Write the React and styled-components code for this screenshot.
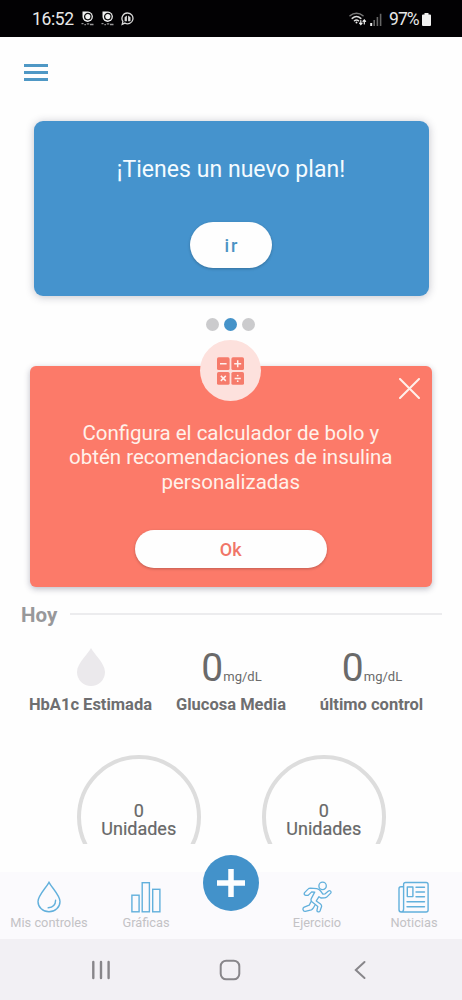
import React from 'react';
import styled, { createGlobalStyle } from 'styled-components';

const GlobalStyle = createGlobalStyle`
  * {
    box-sizing: border-box;
  }
  body {
    margin: 0;
    background: #fefefe;
    font-family: Roboto, sans-serif;
  }
  svg {
    display: block;
    flex: none;
  }
`;

const Screen = styled.div`
  width: 462px;
  height: 1000px;
  display: flex;
  flex-direction: column;
  overflow: hidden;
  background: #fefefe;
`;

const StatusBar = styled.header`
  height: 37px;
  flex: none;
  display: flex;
  align-items: center;
  padding: 1px 31px 0 32px;
  background: #020103;
  color: #e8e8e8;
`;
const Clock = styled.span`
  width: 49px;
  font-size: 17.5px;
  letter-spacing: -0.35px;
  white-space: nowrap;
`;
const StatusGroup = styled.div`
  display: flex;
  align-items: center;
  gap: ${props => props.gap};
  margin-left: ${props => (props.end ? 'auto' : '0')};
`;
const Battery = styled.span`
  width: 30px;
  margin-left: 4px;
  font-size: 17.5px;
  letter-spacing: -0.9px;
  white-space: nowrap;
`;

const TopBar = styled.div`
  height: 84px;
  flex: none;
  padding: 27px 24px 0;
`;
const MenuButton = styled.button`
  width: 24px;
  height: 17px;
  padding: 0;
  border: 0;
  background: none;
  display: flex;
  flex-direction: column;
  justify-content: space-between;
  span {
    width: 24px;
    height: 3px;
    background: #4f98c5;
  }
`;

const PlanCard = styled.section`
  width: 395px;
  height: 175px;
  flex: none;
  margin: 0 0 0 33.5px;
  padding-top: 35px;
  display: flex;
  flex-direction: column;
  align-items: center;
  border-radius: 9px;
  background: #4593cd;
  box-shadow: 0 1px 8px rgba(40, 40, 70, 0.28);
`;
const PlanTitle = styled.h2`
  margin: 0 0 39px;
  font-size: 23px;
  font-weight: 400;
  line-height: 27px;
  letter-spacing: 0.04px;
  color: #f4fbff;
`;
const PillButton = styled.button`
  width: ${props => props.width};
  height: ${props => props.height};
  padding: 0;
  border: 0;
  border-radius: 24px;
  background: #fefefe;
  color: ${props => props.color};
  font-family: inherit;
  font-size: 18px;
  font-weight: 500;
  letter-spacing: ${props => props.spacing};
  text-indent: ${props => props.spacing};
  box-shadow: 0 1px 3px rgba(0, 0, 0, 0.24);
`;

const Dots = styled.div`
  height: 70px;
  flex: none;
  display: flex;
  justify-content: center;
  gap: 5px;
  padding: 22px 1px 0 0;
`;
const Dot = styled.span`
  width: 13px;
  height: 13px;
  border-radius: 50%;
  background: ${props => (props.active ? '#4593c9' : '#cbcbcd')};
`;

const BolusCard = styled.section`
  position: relative;
  width: 401.5px;
  height: 220.5px;
  flex: none;
  margin-left: 30px;
  padding-top: 55px;
  display: flex;
  flex-direction: column;
  align-items: center;
  border-radius: 6px;
  background: #fc7a69;
  box-shadow: 0 2px 6px rgba(50, 50, 80, 0.32);
`;
const CalcBadge = styled.div`
  position: absolute;
  top: -26px;
  left: 170px;
  width: 61px;
  height: 61px;
  display: flex;
  align-items: center;
  justify-content: center;
  border-radius: 50%;
  background: #fde1dd;
`;
const CloseButton = styled.button`
  position: absolute;
  top: 12px;
  right: 11.5px;
  padding: 0;
  border: 0;
  background: none;
`;
const BolusText = styled.p`
  margin: 0 0 36px;
  font-size: 20.5px;
  line-height: 24.3px;
  text-align: center;
  white-space: nowrap;
  color: #fff1ea;
`;

const SectionHead = styled.div`
  height: 55px;
  flex: none;
  display: flex;
  align-items: center;
  gap: 13px;
  padding: 0 20px 0 21px;
  h3 {
    width: 36px;
    margin: 2px 0 0;
    font-size: 20.5px;
    font-weight: 700;
    color: #98989a;
  }
  hr {
    flex: 1;
    height: 2px;
    margin: 0;
    border: 0;
    background: #ececee;
  }
`;

const Stats = styled.div`
  height: 113px;
  flex: none;
  display: grid;
  grid-template-columns: 141px 140px 141px;
  padding-left: 20px;
`;
const Stat = styled.div`
  display: flex;
  flex-direction: column;
  align-items: center;
  color: #6a6a6a;
`;
const StatValue = styled.div`
  height: 52px;
  display: flex;
  align-items: baseline;
  font-size: 39px;
  line-height: 52px;
  padding-left: 1px;
  small {
    font-size: 13px;
  }
`;
const StatDrop = styled.div`
  height: 52px;
  padding-top: 6px;
`;
const StatLabel = styled.div`
  font-size: 16.5px;
  font-weight: 700;
  line-height: 22px;
  white-space: nowrap;
  color: #6e6e70;
`;

const Gauges = styled.div`
  height: 89px;
  flex: none;
  display: flex;
  gap: 60.5px;
  padding-left: 76.5px;
  overflow: hidden;
`;
const Gauge = styled.div`
  width: 124.5px;
  height: 124.5px;
  flex: none;
  padding-top: 43px;
  border: 4px solid #dddddd;
  border-radius: 50%;
  font-size: 18px;
  line-height: 18.7px;
  text-align: center;
  color: #686868;
  -webkit-text-stroke: 0.2px #686868;
`;

const TabBar = styled.nav`
  height: 67px;
  flex: none;
  margin-top: 28px;
  display: grid;
  grid-template-columns: 98px 96px 74px 98px 96px;
  background: #fbfafd;
`;
const Tab = styled.a`
  display: flex;
  flex-direction: column;
  align-items: center;
  padding-top: 9px;
  font-size: 12.8px;
  line-height: 18px;
  letter-spacing: 0;
  white-space: nowrap;
  color: #c3c2c5;
  svg {
    margin: 0 1px 1px 0;
  }
`;
const AddButton = styled.button`
  width: 56px;
  height: 56px;
  margin: -17px 0 0 9px;
  padding: 0;
  border: 0;
  border-radius: 50%;
  display: flex;
  align-items: center;
  justify-content: center;
  background: #4392ca;
`;

const SystemBar = styled.footer`
  height: 61px;
  flex: none;
  display: grid;
  grid-template-columns: 166px 92px 167px;
  align-items: center;
  justify-items: center;
  padding: 1px 0 0 18px;
  background: #f2f0f4;
`;

const AppGlyph = () => (
  <svg width="13" height="16" viewBox="0 0 13 16">
    <path d="M1.500.5h5.500a5.200 5.200 0 1 1-5.500 5.500z" fill="#f2f2f2" />
    <circle cx="6.800" cy="5.600" r="3.200" fill="none" stroke="#111" strokeWidth="1.300" />
    <path d="M0.500 12.600h2M3.400 13.600h1.500M5.800 12.800h2.500M9 13.500h3.500" stroke="#999" strokeWidth="1.300" />
  </svg>
);

const ChatGlyph = () => (
  <svg width="13" height="14" viewBox="0 0 13 14">
    <path
      d="M6.700 1a5.400 5.400 0 1 1-2.800 10.100L1.200 12.400l.7-3A5.400 5.400 0 0 1 6.700 1z"
      fill="none"
      stroke="#d8d8d8"
      strokeWidth="1.300"
    />
    <path d="M3.600 5.200l2.300-1.700v5.800h-2.300zM7.100 3.500l2.400 1.700v4.100H7.100z" fill="#d8d8d8" />
  </svg>
);

const Wifi = () => (
  <svg width="18" height="14" viewBox="0 0 18 14" fill="none" strokeLinecap="round">
    <path d="M1 3.800C4.800.4 10.200.4 14 3.800" stroke="#777" strokeWidth="1.500" />
    <path d="M3.200 6.400c2.600-2.300 6-2.300 8.600 0" stroke="#ddd" strokeWidth="1.500" />
    <path d="M5.400 8.800c1.300-1.100 2.900-1.100 4.200 0" stroke="#ddd" strokeWidth="1.400" />
    <circle cx="7.500" cy="10.600" r="1" fill="#eee" />
    <path
      d="M11.800 8.500v4M10.500 11.200l1.300 1.500 1.300-1.500M15.300 12V8M14 9.400l1.300-1.500 1.300 1.500"
      stroke="#eee"
      strokeWidth="1.200"
    />
  </svg>
);

const Signal = () => (
  <svg width="12" height="13" viewBox="0 0 12 13">
    <path d="M.2 10h2v3h-2z" fill="#eee" />
    <path d="M3.400 7h1.600v6H3.400zM6.600 4h1.600v9H6.600zM9.800.8h1.600V13H9.800z" fill="#666" />
  </svg>
);

const BatteryGlyph = () => (
  <svg width="9" height="13" viewBox="0 0 9 13">
    <path d="M2.500 0h4v1.400H8q1 0 1 1V12q0 1-1 1H1q-1 0-1-1V2.400q0-1 1-1h1.500z" fill="#f2f2f2" />
  </svg>
);

const Calculator = () => (
  <svg width="27" height="28" viewBox="0 0 27 28">
    <g fill="#f67b6b">
      <rect x="0" y="0.300" width="12.600" height="12.800" rx="1.600" />
      <rect x="14.400" y="0.300" width="12.600" height="12.800" rx="1.600" />
      <rect x="0" y="15" width="12.600" height="12.800" rx="1.600" />
      <rect x="14.400" y="15" width="12.600" height="12.800" rx="1.600" />
      <circle cx="20.700" cy="18.600" r="0.900" fill="#fff0ed" />
      <circle cx="20.700" cy="24.200" r="0.900" fill="#fff0ed" />
    </g>
    <path
      d="M3 6.700h6.600M17.200 6.700h7M20.700 3.200v7M3.800 18.900l5 5M8.800 18.900l-5 5M17.600 21.400h6.200"
      fill="none"
      stroke="#fff0ed"
      strokeWidth="1.500"
    />
  </svg>
);

const Close = () => (
  <svg width="21" height="21" viewBox="0 0 21 21">
    <path d="M1 1l19 19M20 1L1 20" stroke="#fff0eb" strokeWidth="2" strokeLinecap="round" />
  </svg>
);

const SolidDrop = () => (
  <svg width="28" height="38" viewBox="0 0 28 38">
    <path d="M14 0C16 5 28 15 28 24a14 14 0 0 1-28 0C0 15 12 5 14 0z" fill="#ebe9ec" />
  </svg>
);

const Drop = () => (
  <svg width="24" height="32" viewBox="0 0 24 32" fill="none" stroke="#62b0dc" strokeWidth="1.400">
    <path d="M12 1.300C9 7 1 14.500 1 20.400a11 10.400 0 0 0 22 0C23 14.500 15 7 12 1.300z" />
    <path d="M18.600 19.200c0 4.500-2.600 7-7.400 7.600" strokeLinecap="round" />
  </svg>
);

const Bars = () => (
  <svg width="30" height="32" viewBox="0 0 30 32" fill="none" stroke="#62b0dc" strokeWidth="1.400">
    <rect x="0.900" y="14.200" width="7.200" height="16.600" />
    <rect x="11.200" y="1.700" width="7.200" height="29.100" />
    <rect x="21.700" y="8.300" width="7.200" height="22.500" />
  </svg>
);

const Runner = () => (
  <svg
    width="30"
    height="32"
    viewBox="0 0 30 32"
    fill="none"
    stroke="#62b0dc"
    strokeWidth="1.300"
    strokeLinejoin="round"
    strokeLinecap="round"
  >
    <circle cx="20.600" cy="4.900" r="3.700" />
    <path d="M4.400 14.300c-1.700.4-2.800-1.300-1.800-2.700l3.400-3.500c.7-.8 1.500-1 2.500-1l6.200.6c1.700.2 2.900 1 3.900 2.300l2.300 3.100 2.300-.3 3.200-2.700c1.700-1.100 3.300.5 2.300 2l-4 4c-.7.600-1.400.8-2.300.8l-3.500.100-1.900-1.300-2.700 4.200 4.200 3.100c1 .8 1.300 1.600 1 2.800l-1.500 4.200c-.6 1.500-3.300 1.200-3-.8l.8-3.800-5.600-4.300c-1.300-1.100-1.600-2.200-.8-3.700l3.300-6.300-3-.2-3.300 3.200c-.6.400-1.300.4-2 .2z" />
    <path d="M8.900 20.900l-1.700 3.300-5 1.900c-2.200 1.200-1.200 4.600 1.100 4.300l6.100-1.600c.9-.3 1.300-.8 1.800-1.600l1.700-3" />
  </svg>
);

const News = () => (
  <svg
    width="31"
    height="32"
    viewBox="0 0 31 32"
    fill="none"
    stroke="#62b0dc"
    strokeWidth="1.400"
    strokeLinejoin="round"
  >
    <path d="M5.600 28V3.500q0-2 2-2h20.500q2 0 2 2V29q0 2-2 2H3.200Q1 31 1 28.500V7.700q0-2 2-2h2.600M5.600 28q0 3-2.400 3" />
    <rect x="9.300" y="6" width="5.600" height="9.600" />
    <path d="M18 6.300h8.500M18 11h8.500M18 15.700h8.500M9 20.800h17.500M9 25.800h17.500" strokeLinecap="round" />
  </svg>
);

const Plus = () => (
  <svg width="28" height="28" viewBox="0 0 28 28">
    <path d="M0 14h28M14 0v28" stroke="#fdfeff" strokeWidth="5.500" />
  </svg>
);

const Recents = () => (
  <svg width="20" height="20" viewBox="0 0 20 20">
    <path d="M2.300 2v16M10 2v16M17.600 2v16" stroke="#88868a" strokeWidth="2.400" strokeLinecap="round" />
  </svg>
);

const Home = () => (
  <svg width="22" height="22" viewBox="0 0 22 22">
    <rect x="1.700" y="1.700" width="18.600" height="18.600" rx="5.500" fill="none" stroke="#88868a" strokeWidth="2" />
  </svg>
);

const Back = () => (
  <svg width="12" height="20" viewBox="0 0 12 20">
    <path d="M10.500 2L1.800 10l8.700 8" fill="none" stroke="#88868a" strokeWidth="2" strokeLinecap="round" />
  </svg>
);

const readings = [
  { label: 'Glucosa Media', value: 0 },
  { label: 'último control', value: 0 },
];

export default function App() {
  return (
    <Screen>
      <GlobalStyle />
      <StatusBar>
        <Clock>16:52</Clock>
        <StatusGroup gap="7px">
          <AppGlyph />
          <AppGlyph />
          <ChatGlyph />
        </StatusGroup>
        <StatusGroup gap="3px" end>
          <Wifi />
          <Signal />
          <Battery>97%</Battery>
          <BatteryGlyph />
        </StatusGroup>
      </StatusBar>

      <TopBar>
        <MenuButton aria-label="Menú">
          <span />
          <span />
          <span />
        </MenuButton>
      </TopBar>

      <PlanCard>
        <PlanTitle>¡Tienes un nuevo plan!</PlanTitle>
        <PillButton width="82px" height="46px" color="#4b93c4" spacing="2px">
          ir
        </PillButton>
      </PlanCard>
      <Dots>
        <Dot />
        <Dot active />
        <Dot />
      </Dots>

      <BolusCard>
        <CalcBadge>
          <Calculator />
        </CalcBadge>
        <CloseButton aria-label="Cerrar">
          <Close />
        </CloseButton>
        <BolusText>
          Configura el calculador de bolo y<br />
          obtén recomendaciones de insulina
          <br />
          personalizadas
        </BolusText>
        <PillButton width="192px" height="38.5px" color="#f07668" spacing="0px">
          Ok
        </PillButton>
      </BolusCard>

      <SectionHead>
        <h3>Hoy</h3>
        <hr />
      </SectionHead>
      <Stats>
        <Stat>
          <StatDrop>
            <SolidDrop />
          </StatDrop>
          <StatLabel>HbA1c Estimada</StatLabel>
        </Stat>
        {readings.map(reading => (
          <Stat key={reading.label}>
            <StatValue>
              {reading.value}
              <small>mg/dL</small>
            </StatValue>
            <StatLabel>{reading.label}</StatLabel>
          </Stat>
        ))}
      </Stats>
      <Gauges>
        {[0, 0].map((units, i) => (
          <Gauge key={i}>
            {units}
            <br />
            Unidades
          </Gauge>
        ))}
      </Gauges>

      <TabBar>
        <Tab>
          <Drop />
          Mis controles
        </Tab>
        <Tab>
          <Bars />
          Gráficas
        </Tab>
        <AddButton aria-label="Añadir">
          <Plus />
        </AddButton>
        <Tab>
          <Runner />
          Ejercicio
        </Tab>
        <Tab>
          <News />
          Noticias
        </Tab>
      </TabBar>
      <SystemBar>
        <Recents />
        <Home />
        <Back />
      </SystemBar>
    </Screen>
  );
}
